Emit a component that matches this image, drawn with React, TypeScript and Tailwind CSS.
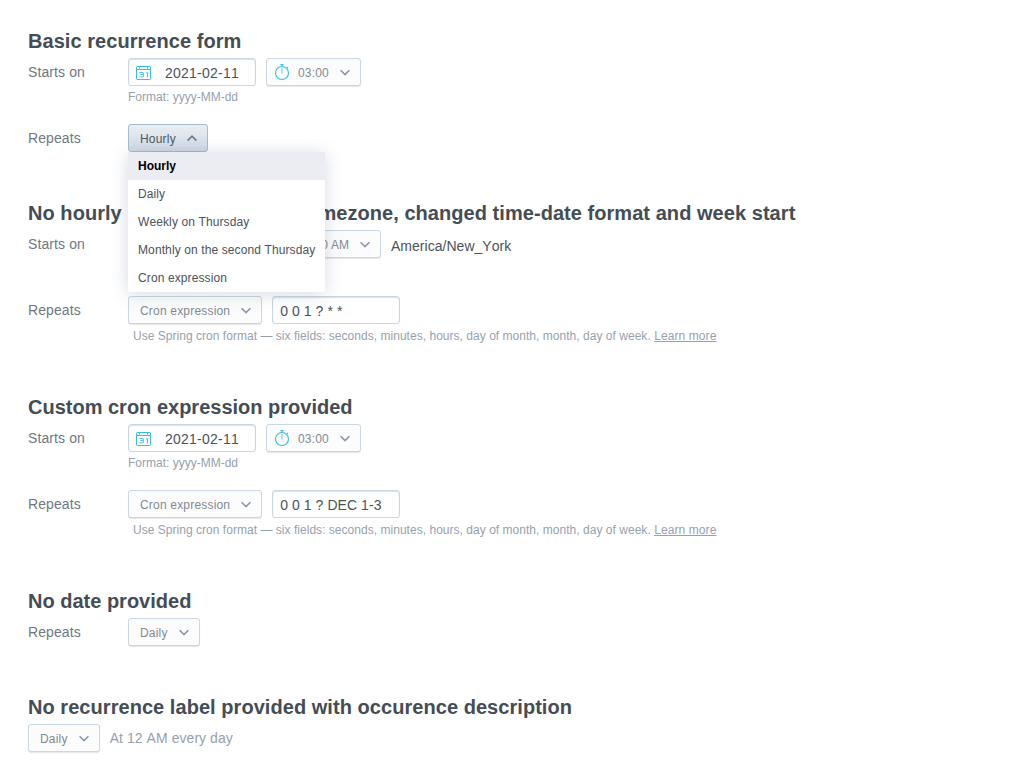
import type { ReactNode } from "react";

function Chevron({ up = false }: { up?: boolean }) {
  return (
    <svg width="10" height="7" viewBox="0 0 10 7" fill="none" stroke={up ? "#6f7a88" : "#8b97a6"} strokeWidth="1.6" className="shrink-0">
      <path d={up ? "M0.6 5.6 5 1.2 9.4 5.6" : "M0.6 1.2 5 5.6 9.4 1.2"} />
    </svg>
  );
}

function CalendarIcon() {
  return (
    <svg width="16" height="16" viewBox="0 0 16 16" fill="none" stroke="#35bde6" className="shrink-0">
      <rect x="0.5" y="2.5" width="14" height="13" rx="0.8" />
      <path d="M1 5.5h13M3.5 2.5v2M11.5 2.5v2" />
      <path d="M3.3 8.5h3.6q.5 0 .5.5v3.4q0 .5-.5.5H3.3M4.4 10.6h2.8M10 9l1.5-.5v4.9" strokeWidth="0.9" />
    </svg>
  );
}

function StopwatchIcon() {
  return (
    <svg width="16" height="18" viewBox="0 0 16 18" fill="none" stroke="#35bde6" className="shrink-0">
      <circle cx="8" cy="10" r="6.5" strokeWidth="1.1" />
      <path d="M8 5v5.5" opacity="0.8" />
      <path d="M6.5 1.6h3M8 1.6v2M13 4l1 1" strokeWidth="1.1" />
    </svg>
  );
}

function Select({ children, icon, open = false, tight = false }: { children: ReactNode; icon?: ReactNode; open?: boolean; tight?: boolean }) {
  return (
    <button
      className={`flex h-7 shrink-0 items-center rounded-[3px] border pr-2.5 text-xs whitespace-nowrap ${icon ? "pl-[7px]" : "pl-[11px]"} ${tight ? "tracking-[-0.05px]" : "tracking-[0.19px]"} ${
        open
          ? "border-[#a3bdd0] bg-linear-to-b from-[#e9edf4] to-[#d1dae6] text-[#4f5862]"
          : "border-[#c8d7e3] bg-[#fcfcfc] text-[#7f8a97] shadow-[0_1px_1px_rgba(0,0,0,0.1)]"
      }`}
    >
      {icon && <span className="mr-2">{icon}</span>}
      <span className="mr-[11px] pt-px">{children}</span>
      <Chevron up={open} />
    </button>
  );
}

function DateInput({ value }: { value: string }) {
  return (
    <div className="flex h-7 w-32 items-center rounded-[3px] border border-[#c8d7e3] bg-white pl-[7px] text-sm text-[#4a525b] shadow-[inset_0_1px_1px_rgba(180,200,215,0.5)]">
      <CalendarIcon />
      <span className="ml-[13px] pt-px tracking-[0.24px]">{value}</span>
    </div>
  );
}

function CronInput({ value }: { value: string }) {
  return (
    <div className="flex h-7 w-32 items-center rounded-[3px] border border-[#c8d7e3] bg-white pt-px pl-[7px] text-sm tracking-[0.06px] text-[#4a525b] shadow-[inset_0_1px_1px_rgba(180,200,215,0.5)]">
      {value}
    </div>
  );
}

function Row({ label, children }: { label: string; children: ReactNode }) {
  return (
    <div className="flex">
      <div className="w-[100px] shrink-0 text-sm leading-7 tracking-[0.1px] text-[#6f7883]">{label}</div>
      <div>{children}</div>
    </div>
  );
}

function StartsOn({ format, time, zone }: { format: string; time: string; zone?: string }) {
  return (
    <div className="h-[66px]">
      <Row label="Starts on">
        <div className="flex gap-2.5">
          <DateInput value={format === "yyyy-MM-dd" ? "2021-02-11" : "02/11/2021"} />
          <Select icon={<StopwatchIcon />} tight={Boolean(zone)}>{time}</Select>
          {zone && <span className="text-sm leading-8 tracking-[0.03px] text-[#4a525b]">{zone}</span>}
        </div>
        <div className="text-xs leading-[22px] text-[#96a1ae]">Format: {format}</div>
      </Row>
    </div>
  );
}

function CronRow({ value }: { value: string }) {
  return (
    <Row label="Repeats">
      <div className="flex gap-2.5">
        <Select>Cron expression</Select>
        <CronInput value={value} />
      </div>
      <div className="h-[22px] pl-[5px] text-xs leading-6 tracking-[0.03px] text-[#96a1ae]">
        Use Spring cron format — six fields: seconds, minutes, hours, day of month, month, day of week.{" "}
        <a className="tracking-[0.1px] underline">Learn more</a>
      </div>
    </Row>
  );
}

function Section({ title, wide = false, children }: { title: string; wide?: boolean; children: ReactNode }) {
  return (
    <section>
      <h2 className={`mb-1.5 h-6 text-xl leading-[26px] font-bold text-[#444d55] ${wide ? "tracking-[0.05px]" : "tracking-normal"}`}>{title}</h2>
      {children}
    </section>
  );
}

function Menu() {
  const items = ["Daily", "Weekly on Thursday", "Monthly on the second Thursday", "Cron expression"];
  return (
    <ul className="absolute top-7 left-0 z-10 w-[197px] rounded-b-[2px] bg-white text-xs leading-7 tracking-[0.11px] whitespace-nowrap text-[#4a525b] shadow-[0_2px_18px_rgba(67,84,110,0.22)]">
      <li className="bg-[#ebedf2] px-2.5 font-bold tracking-normal text-black">Hourly</li>
      {items.map((item) => (
        <li key={item} className="px-2.5">{item}</li>
      ))}
    </ul>
  );
}

export default function App() {
  return (
    <main className="flex h-[782px] flex-col gap-12 overflow-hidden bg-white px-7 pt-7 font-['Liberation_Sans',Arial,sans-serif] [font-kerning:none]">
      <Section title="Basic recurrence form" wide>
        <StartsOn format="yyyy-MM-dd" time="03:00" />
        <Row label="Repeats">
          <div className="relative">
            <Select open>Hourly</Select>
            <Menu />
          </div>
        </Row>
      </Section>
      <Section title="No hourly repeat option with timezone, changed time-date format and week start" wide>
        <StartsOn format="MM/dd/yyyy" time="03:00 AM" zone="America/New_York" />
        <CronRow value="0 0 1 ? * *" />
      </Section>
      <Section title="Custom cron expression provided">
        <StartsOn format="yyyy-MM-dd" time="03:00" />
        <CronRow value="0 0 1 ? DEC 1-3" />
      </Section>
      <Section title="No date provided">
        <Row label="Repeats">
          <Select>Daily</Select>
        </Row>
      </Section>
      <Section title="No recurrence label provided with occurence description" wide>
        <div className="flex gap-2.5">
          <Select>Daily</Select>
          <span className="text-sm leading-7 tracking-[0.06px] text-[#96a1ae]">At 12 AM every day</span>
        </div>
      </Section>
    </main>
  );
}
